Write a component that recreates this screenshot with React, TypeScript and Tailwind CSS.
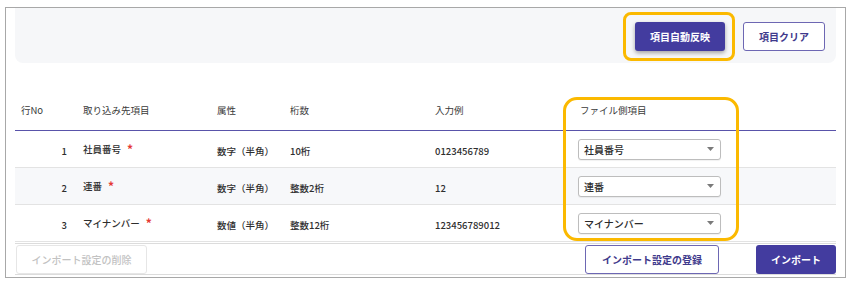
import React from "react";

const rows = [
  { no: 1, name: "社員番号", type: "数字（半角）", digits: "10桁", sample: "0123456789", file: "社員番号", alt: false },
  { no: 2, name: "連番", type: "数字（半角）", digits: "整数2桁", sample: "12", file: "連番", alt: true },
  { no: 3, name: "マイナンバー", type: "数値（半角）", digits: "整数12桁", sample: "123456789012", file: "マイナンバー", alt: false },
];

const cols = "grid grid-cols-[68px_134px_73px_145px_143px_1fr]";

function Select({ value }: { value: string }) {
  return (
    <div className="flex h-[21px] w-[143px] items-center justify-between rounded-[3px] border border-[#bdbdbd] bg-white pl-[5px] pr-[6px] text-[10px] font-medium text-[#2b2b2b] shadow-[0_1px_1px_rgba(0,0,0,0.06)]">
      <span>{value}</span>
      <svg width="7" height="4" viewBox="0 0 7 4">
        <path d="M0 0h7L3.5 4z" fill="#7a7a7a" />
      </svg>
    </div>
  );
}

export default function App() {
  return (
    <div
      className="relative h-[284px] w-[853px] bg-white pl-[5px] pt-[7px]"
      style={{ fontFamily: '"Noto Sans CJK JP", "Noto Sans", sans-serif' }}
    >
      <div className="flex h-[271px] w-[841px] flex-col border border-[#a8a8a8] px-[9px]">
        {/* top action panel */}
        <div className="flex h-[55px] shrink-0 items-start justify-end gap-[18px] rounded-b-[8px] bg-[#f6f7f9] pr-[11px] pt-[14px]">
          <button className="h-[29px] w-[90px] rounded-[3px] bg-[#433c9f] text-[10px] font-bold text-white shadow-[0_2px_4px_rgba(0,0,0,0.35)]">
            項目自動反映
          </button>
          <button className="h-[29px] w-[82px] rounded-[3px] border border-[#6d67b3] bg-white text-[10px] font-bold text-[#3f3a8c]">
            項目クリア
          </button>
        </div>

        {/* table */}
        <div className="mt-[27px]">
          <div className={`${cols} h-[41px] items-center border-b border-[#5953aa] text-[9.5px] text-[#3a3a3a]`}>
            <div className="pl-[6px]">行No</div>
            <div>取り込み先項目</div>
            <div>属性</div>
            <div>桁数</div>
            <div>入力例</div>
            <div className="pl-[2px]">ファイル側項目</div>
          </div>
          {rows.map((r) => (
            <div
              key={r.no}
              className={`${cols} h-[37px] items-center border-b border-[#e3e3e3] text-[9.5px] font-medium text-[#2e2e2e] ${r.alt ? "bg-[#f7f8fa]" : "bg-white"}`}
            >
              <div className="pr-[16px] pt-[4px] text-right">{r.no}</div>
              <div className="flex items-start gap-[6px]">
                <span>{r.name}</span>
                <span className="text-[12px] font-bold leading-[13px] text-[#e53935]">*</span>
              </div>
              <div className="pt-[4px]">{r.type}</div>
              <div className="pt-[4px]">{r.digits}</div>
              <div className="pt-[4px]">{r.sample}</div>
              <div>
                <Select value={r.file} />
              </div>
            </div>
          ))}
        </div>

        {/* footer */}
        <div className="mt-[1px] flex h-[32px] items-center justify-between border-y border-[#dcdcdc] pl-[1px]">
          <button className="h-[29px] w-[131px] rounded-[3px] border border-[#e6e6e6] bg-white text-[10px] font-medium text-[#c2c2c2]">
            インポート設定の削除
          </button>
          <div className="flex items-center gap-[37px]">
            <button className="h-[29px] w-[134px] rounded-[3px] border border-[#6d67b3] bg-white text-[10px] font-bold text-[#3f3a8c]">
              インポート設定の登録
            </button>
            <button className="h-[29px] w-[80px] rounded-[3px] bg-[#433c9f] text-[10px] font-bold text-white">
              インポート
            </button>
          </div>
        </div>
      </div>

      {/* highlight overlays */}
      <div className="pointer-events-none absolute left-[623px] top-[12px] h-[49px] w-[112px] rounded-[8px] border-[3px] border-[#fbb900]" />
      <div className="pointer-events-none absolute left-[563px] top-[97px] h-[144px] w-[176px] rounded-[14px] border-[3px] border-[#fbb900]" />
    </div>
  );
}
